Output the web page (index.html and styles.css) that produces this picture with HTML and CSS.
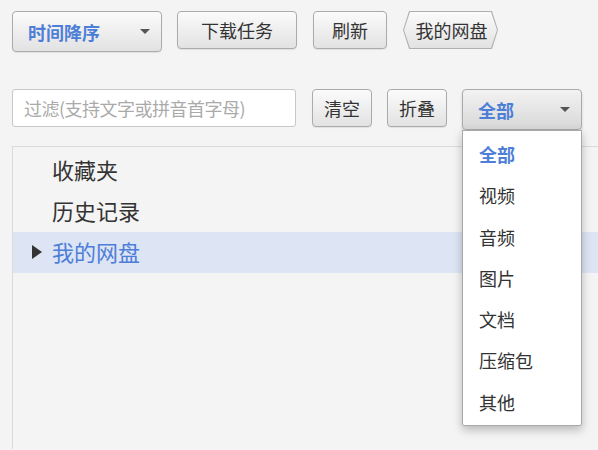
FILE: index.html
```html
<!DOCTYPE html>
<html lang="zh-CN">
<head>
<meta charset="utf-8">
<title>网盘</title>
<link rel="stylesheet" href="styles.css">
</head>
<body>
<div class="toolbar row-top">
  <div class="btn select select-sort"><span class="sel-label">时间降序</span><span class="caret"></span></div>
  <div class="btn btn-download">下载任务</div>
  <div class="btn btn-refresh">刷新</div>
  <div class="crumb"><div class="crumb-inner">我的网盘</div></div>
</div>
<div class="toolbar row-filter">
  <div class="filter">过滤(支持文字或拼音首字母)</div>
  <div class="btn btn-small btn-clear">清空</div>
  <div class="btn btn-small">折叠</div>
  <div class="select-wrap">
    <div class="btn select select-type active"><span class="sel-label">全部</span><span class="caret"></span></div>
    <ul class="menu">
      <li class="menu-item selected">全部</li>
      <li class="menu-item">视频</li>
      <li class="menu-item">音频</li>
      <li class="menu-item">图片</li>
      <li class="menu-item">文档</li>
      <li class="menu-item">压缩包</li>
      <li class="menu-item">其他</li>
    </ul>
  </div>
</div>
<div class="panel">
  <div class="tree-item">收藏夹</div>
  <div class="tree-item">历史记录</div>
  <div class="tree-item current"><span class="arrow"></span>我的网盘</div>
</div>
</body>
</html>
```
FILE: styles.css
```css
html, body {
  margin: 0;
  padding: 0;
  height: 100%;
}
body {
  background: #f4f4f4;
  font-family: "Noto Sans CJK SC", "Noto Sans", sans-serif;
  color: #333;
  overflow: hidden;
}
.toolbar {
  display: flex;
  align-items: flex-start;
  padding-left: 12px;
}
.row-top {
  padding-top: 11px;
  gap: 15px;
}
.row-filter {
  margin-top: 37px;
  gap: 15px;
}
.btn {
  box-sizing: border-box;
  height: 38px;
  border: 1px solid #ababab;
  border-radius: 4px;
  background: linear-gradient(#fbfbfb, #e2e2e2);
  display: flex;
  align-items: center;
  justify-content: center;
  font-size: 18px;
  color: #333;
  box-shadow: 0 1px 1px rgba(0,0,0,0.08);
}
.select {
  justify-content: space-between;
  padding: 0 11px 0 15px;
}
.select-sort {
  width: 150px;
  height: 41px;
}
.sel-label {
  color: #4d7ed8;
  font-weight: bold;
}
.caret {
  width: 0;
  height: 0;
  border-left: 5px solid transparent;
  border-right: 5px solid transparent;
  border-top: 5px solid #555;
}
.btn-download {
  width: 120px;
}
.btn-refresh {
  width: 74px;
  margin-left: 1px;
}
.crumb {
  margin-left: 1px;
  width: 95px;
  height: 38px;
  box-sizing: border-box;
  padding: 1px;
  background: #b0b0b0;
  clip-path: polygon(6px 0, 89px 0, 95px 19px, 89px 38px, 6px 38px, 0 19px);
}
.crumb-inner {
  height: 100%;
  background: linear-gradient(#fbfbfb, #e2e2e2);
  clip-path: polygon(6px 0, 87px 0, 93px 18px, 87px 36px, 6px 36px, 0 18px);
  display: flex;
  align-items: center;
  justify-content: center;
  font-size: 18px;
  padding-left: 2px;
}
.filter {
  box-sizing: border-box;
  width: 284px;
  height: 38px;
  border: 1px solid #c8c8c8;
  border-radius: 3px;
  background: #fff;
  color: #aaa;
  font-size: 18px;
  display: flex;
  align-items: center;
  padding-left: 11px;
  letter-spacing: -0.5px;
}
.btn-small {
  width: 60px;
}
.btn-clear {
  margin-left: 1px;
}
.select-wrap {
  position: relative;
}
.select-type {
  width: 120px;
  height: 41px;
  padding: 0 11px 0 15px;
  background: linear-gradient(#f2f2f2, #d8d8d8);
  box-shadow: 0 2px 3px rgba(0,0,0,0.15);
}
.menu {
  position: absolute;
  top: 41px;
  left: 0;
  width: 120px;
  box-sizing: border-box;
  margin: 0;
  padding: 3px 0 2px;
  list-style: none;
  background: #fff;
  border: 1px solid #a8a8a8;
  border-radius: 0 0 2px 2px;
  box-shadow: 0 4px 10px rgba(0,0,0,0.25);
  z-index: 5;
}
.menu-item {
  height: 41.3px;
  line-height: 41.3px;
  padding-left: 16px;
  font-size: 18px;
  color: #333;
}
.menu-item.selected {
  color: #4d7ed8;
  font-weight: bold;
}
.panel {
  margin-top: 16px;
  margin-left: 12px;
  border-top: 1px solid #dadada;
  border-left: 1px solid #dadada;
  height: calc(100% - 147px);
  box-sizing: border-box;
  padding-top: 3px;
}
.tree-item {
  box-sizing: border-box;
  height: 41px;
  display: flex;
  align-items: center;
  padding-left: 39px;
  padding-bottom: 3px;
  font-size: 22px;
  color: #333;
  position: relative;
}
.tree-item.current {
  background: #dde4f4;
  color: #4d7ed8;
}
.arrow {
  position: absolute;
  left: 19px;
  top: 13px;
  width: 0;
  height: 0;
  border-top: 7px solid transparent;
  border-bottom: 7px solid transparent;
  border-left: 10px solid #333;
}
```
